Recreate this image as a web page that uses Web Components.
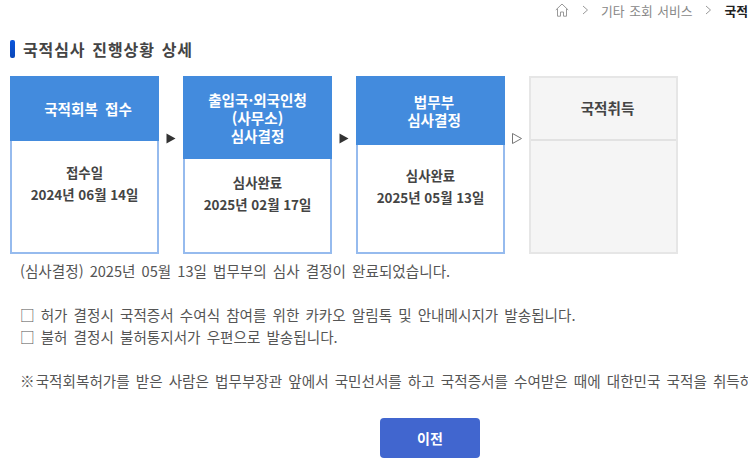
<!DOCTYPE html>
<html lang="ko">
<head>
<meta charset="utf-8">
<title>국적심사 진행상황 상세</title>
<style>
  html, body { margin: 0; height: 467px; overflow: hidden; background: #fff; }
  body { font-family: "Noto Sans CJK KR", "Noto Sans", sans-serif; color: #555; }
</style>
</head>
<body>
<nat-page>
  <bread-crumb slot="crumb">
    <span slot="parent">기타 조회 서비스</span>
    <b slot="current">국적심사 진행상황</b>
  </bread-crumb>
  <section-title slot="title">국적심사 진행상황 상세</section-title>
  <step-flow slot="flow">
    <step-box head-height="65" body-top="23" head-shift="7">
      <span slot="head">국적회복 접수</span>
      <span>접수일</span>
      <span>2024년 06월 14일</span>
    </step-box>
    <step-arrow></step-arrow>
    <step-box head-height="83" body-top="15">
      <span slot="head">출입국·외국인청<br>(사무소)<br>심사결정</span>
      <span>심사완료</span>
      <span>2025년 02월 17일</span>
    </step-box>
    <step-arrow></step-arrow>
    <step-box head-height="69" body-top="22" head-shift="7">
      <span slot="head">법무부<br>심사결정</span>
      <span>심사완료</span>
      <span>2025년 05월 13일</span>
    </step-box>
    <step-arrow hollow></step-arrow>
    <step-box head-height="63" head-shift="8" pending>
      <span slot="head">국적취득</span>
    </step-box>
  </step-flow>
  <info-text slot="info">
    <p>(심사결정) 2025년 05월 13일 법무부의 심사 결정이 완료되었습니다.</p>
    <p>&nbsp;</p>
    <p>□ 허가 결정시 국적증서 수여식 참여를 위한 카카오 알림톡 및 안내메시지가 발송됩니다.</p>
    <p>□ 불허 결정시 불허통지서가 우편으로 발송됩니다.</p>
    <p>&nbsp;</p>
    <p><span style="letter-spacing:-2.5px">※ </span>국적회복허가를 받은 사람은 법무부장관 앞에서 국민선서를 하고 국적증서를 수여받은 때에 대한민국 국적을 취득하게 됩니다.</p>
  </info-text>
  <blue-button slot="action">이전</blue-button>
</nat-page>

<script>
const pageTpl = document.createElement("template");
pageTpl.innerHTML = `
  <style>
    :host { display: block; width: 748px; height: 467px; overflow: hidden; }
    .sheet { display: flex; flex-direction: column; width: 860px; }
    .action { display: flex; justify-content: center; margin-top: 26px; }
  </style>
  <div class="sheet">
    <slot name="crumb"></slot>
    <slot name="title"></slot>
    <slot name="flow"></slot>
    <slot name="info"></slot>
    <div class="action"><slot name="action"></slot></div>
  </div>
`;
class NatPage extends HTMLElement {
  constructor() {
    super();
    this.attachShadow({ mode: "open" }).appendChild(pageTpl.content.cloneNode(true));
  }
}

const crumbTpl = document.createElement("template");
crumbTpl.innerHTML = `
  <style>
    :host { display: flex; align-items: center; gap: 12.5px; height: 20px; padding-left: 555px; font-size: 12.8px; word-spacing: 1px; color: #888; white-space: nowrap; }
    svg { flex: none; display: block; }
    ::slotted(b) { color: #222; font-weight: 700; }
  </style>
  <svg width="14" height="14" viewBox="0 0 14 14" fill="none" stroke="#999" stroke-width="1">
    <path d="M.8 7 7 1l6.2 6M2.5 5.6v7.6h3V9h3v4.2h3V5.6"/>
  </svg>
  <svg width="7" height="10" viewBox="0 0 7 10" fill="none" stroke="#999"><path d="M1 1l4.5 4L1 9"/></svg>
  <slot name="parent"></slot>
  <svg width="7" height="10" viewBox="0 0 7 10" fill="none" stroke="#999"><path d="M1 1l4.5 4L1 9"/></svg>
  <slot name="current"></slot>
`;
class BreadCrumb extends HTMLElement {
  constructor() {
    super();
    this.attachShadow({ mode: "open" }).appendChild(crumbTpl.content.cloneNode(true));
  }
}

const titleTpl = document.createElement("template");
titleTpl.innerHTML = `
  <style>
    :host { display: flex; align-items: center; gap: 8px; height: 18px; margin: 20px 0 0 10px; font-size: 16px; letter-spacing: .9px; word-spacing: 1.5px; font-weight: 700; color: #444; }
    i { width: 5px; height: 18px; border-radius: 2px; background: linear-gradient(#0a56dc, #0b47b8); }
  </style>
  <i></i><span><slot></slot></span>
`;
class SectionTitle extends HTMLElement {
  constructor() {
    super();
    this.attachShadow({ mode: "open" }).appendChild(titleTpl.content.cloneNode(true));
  }
}

const flowTpl = document.createElement("template");
flowTpl.innerHTML = `
  <style>
    :host { display: flex; margin: 18px 0 0 10px; }
  </style>
  <slot></slot>
`;
class StepFlow extends HTMLElement {
  constructor() {
    super();
    this.attachShadow({ mode: "open" }).appendChild(flowTpl.content.cloneNode(true));
  }
}

const boxTpl = document.createElement("template");
boxTpl.innerHTML = `
  <style>
    :host { display: flex; flex-direction: column; box-sizing: border-box; width: 149px; height: 178px; border: 2px solid #96bbee; font-size: 13.4px; font-weight: 700; color: #444; text-align: center; }
    .head { display: flex; align-items: center; justify-content: center; flex: none; box-sizing: border-box; background: #438bdd; color: #fff; font-size: 14.6px; word-spacing: 3px; line-height: 18px; margin: -2px -2px 0; }
    .body { display: flex; flex-direction: column; gap: 6px; line-height: 16px; }
    ::slotted(span) { display: block; }
    :host([pending]) { background: #f5f5f5; border-color: #e6e6e6; }
    :host([pending]) .head { background: #f5f5f5; color: #444; margin: 0; border-bottom: 2px solid #e2e2e2; padding-bottom: 2px; }
  </style>
  <div class="head"><slot name="head"></slot></div>
  <div class="body"><slot></slot></div>
`;
class StepBox extends HTMLElement {
  constructor() {
    super();
    this.attachShadow({ mode: "open" }).appendChild(boxTpl.content.cloneNode(true));
  }
  connectedCallback() {
    const head = this.shadowRoot.querySelector(".head");
    head.style.height = this.getAttribute("head-height") + "px";
    head.style.paddingLeft = (this.getAttribute("head-shift") || 0) + "px";
    this.shadowRoot.querySelector(".body").style.paddingTop = (this.getAttribute("body-top") || 0) + "px";
  }
}

const arrowTpl = document.createElement("template");
arrowTpl.innerHTML = `
  <style>
    :host { display: flex; justify-content: center; flex: none; width: 24px; padding-top: 57px; }
    svg { display: block; }
  </style>
  <svg width="10" height="11" viewBox="0 0 10 11"><path d="M.5.5v10l9-5z"/></svg>
`;
class StepArrow extends HTMLElement {
  constructor() {
    super();
    this.attachShadow({ mode: "open" }).appendChild(arrowTpl.content.cloneNode(true));
  }
  connectedCallback() {
    const p = this.shadowRoot.querySelector("path");
    if (this.hasAttribute("hollow")) {
      p.setAttribute("fill", "#fff");
      p.setAttribute("stroke", "#777");
    } else {
      p.setAttribute("fill", "#333");
    }
  }
}

const infoTpl = document.createElement("template");
infoTpl.innerHTML = `
  <style>
    :host { display: block; margin: 6px 0 0 20px; font-size: 14.6px; word-spacing: 2px; line-height: 22px; color: #555; white-space: nowrap; }
    ::slotted(p) { margin: 0; }
  </style>
  <slot></slot>
`;
class InfoText extends HTMLElement {
  constructor() {
    super();
    this.attachShadow({ mode: "open" }).appendChild(infoTpl.content.cloneNode(true));
  }
}

const btnTpl = document.createElement("template");
btnTpl.innerHTML = `
  <style>
    :host { display: block; }
    button { display: block; width: 100px; height: 40px; padding: 0; border: 0; border-radius: 4px; background: #4166cf; color: #fff; font: 700 14px "Noto Sans CJK KR", sans-serif; }
  </style>
  <button type="button"><slot></slot></button>
`;
class BlueButton extends HTMLElement {
  constructor() {
    super();
    this.attachShadow({ mode: "open" }).appendChild(btnTpl.content.cloneNode(true));
  }
}

customElements.define("nat-page", NatPage);
customElements.define("bread-crumb", BreadCrumb);
customElements.define("section-title", SectionTitle);
customElements.define("step-flow", StepFlow);
customElements.define("step-box", StepBox);
customElements.define("step-arrow", StepArrow);
customElements.define("info-text", InfoText);
customElements.define("blue-button", BlueButton);
</script>
</body>
</html>
